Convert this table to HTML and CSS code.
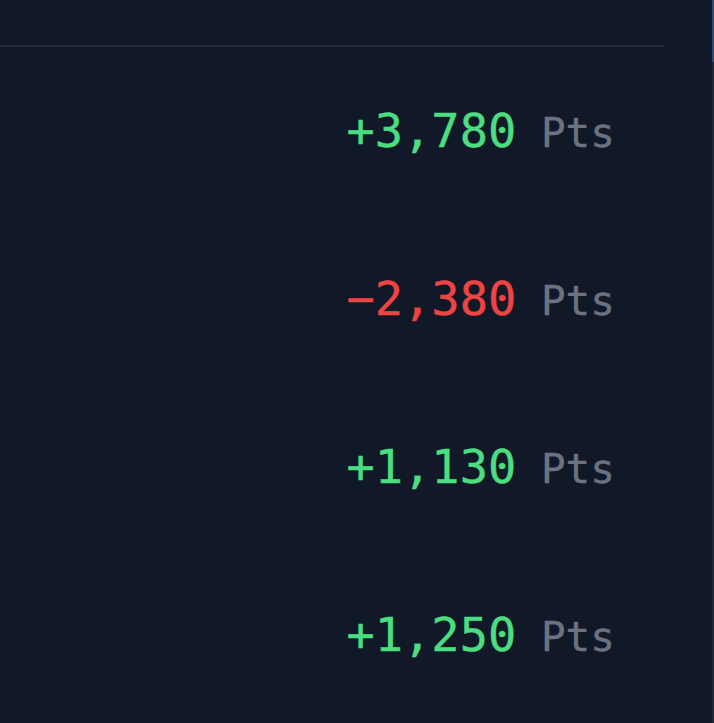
FILE: index.html
```html
<!DOCTYPE html>
<html lang="en">
  <head>
    <meta charset="UTF-8" />
    <meta name="viewport" content="width=device-width, initial-scale=1.0" />
    <title>Points</title>
    <link rel="stylesheet" href="styles.css">
  </head>
  <body>
    <div class="panel">
      <div class="divider"></div>
      <ul class="points">
        <li><span class="amount gain">+3,780</span><span class="unit"> Pts</span></li>
        <li><span class="amount loss">−2,380</span><span class="unit"> Pts</span></li>
        <li><span class="amount gain">+1,130</span><span class="unit"> Pts</span></li>
        <li><span class="amount gain">+1,250</span><span class="unit"> Pts</span></li>
      </ul>
    </div>
    <div class="edge">
      <div class="thumb"></div>
    </div>
  </body>
</html>
```

FILE: styles.css
```css
body {
  margin: 0;
  background: #111827;
  font-family: "DejaVu Sans Mono", "Liberation Mono", monospace;
  display: flex;
  height: 723px;
  overflow: hidden;
}

.panel {
  flex: 1;
}

/* ========== Divider ========== */
.divider {
  margin-top: 45px;
  width: 664px;
  height: 2px;
  background: #242c3a;
}

/* ========== Rows ========== */
.points {
  list-style: none;
  margin: 0;
  padding: 0 97px 0 0;
}

.points li {
  height: 168px;
  line-height: 168px;
  text-align: right;
  font-size: 47px;
  white-space: pre;
  -webkit-text-stroke: 0.4px currentColor;
}

.gain {
  color: #4ade80;
}

.loss {
  color: #ef4444;
}

.unit {
  color: #6b7280;
  font-size: 41px;
}

/* ========== Right edge ========== */
.edge {
  width: 2px;
  background: #1f2736;
}

.thumb {
  height: 62px;
  background: #2f4a72;
}
```
